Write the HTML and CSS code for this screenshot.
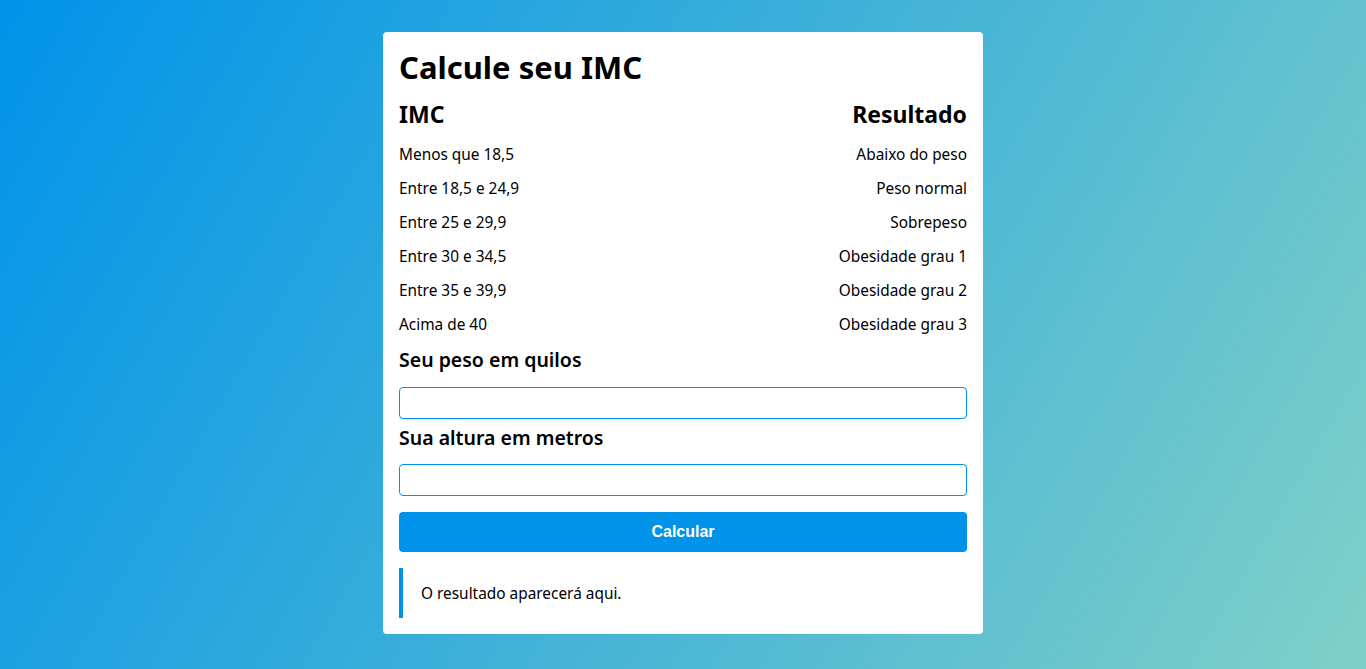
FILE: index.html
```html
<!DOCTYPE html>
<html lang="pt-BR">
<head>
<meta charset="utf-8">
<title>Calcule seu IMC</title>
<link rel="stylesheet" href="styles.css">
</head>
<body>
<main class="card">
  <h1 class="title">Calcule seu IMC</h1>
  <div class="table">
    <div class="th">IMC</div><div class="th right">Resultado</div>
    <div class="td">Menos que 18,5</div><div class="td right">Abaixo do peso</div>
    <div class="td">Entre 18,5 e 24,9</div><div class="td right">Peso normal</div>
    <div class="td">Entre 25 e 29,9</div><div class="td right">Sobrepeso</div>
    <div class="td">Entre 30 e 34,5</div><div class="td right">Obesidade grau 1</div>
    <div class="td">Entre 35 e 39,9</div><div class="td right">Obesidade grau 2</div>
    <div class="td">Acima de 40</div><div class="td right">Obesidade grau 3</div>
  </div>
  <label class="label" for="peso">Seu peso em quilos</label>
  <input class="input" id="peso" type="text">
  <label class="label" for="altura">Sua altura em metros</label>
  <input class="input" id="altura" type="text">
  <button class="button" type="button">Calcular</button>
  <div class="result">O resultado aparecerá aqui.</div>
</main>
</body>
</html>
```
FILE: styles.css
```css
* { box-sizing: border-box; }
html, body { height: 100%; }
body {
  margin: 0;
  background: linear-gradient(120deg, #0093E9 0%, #80D0C7 100%);
  font-family: "Noto Sans", "Open Sans", sans-serif;
  color: #000;
  display: flex;
  justify-content: center;
  align-items: flex-start;
}
.card {
  width: 600px;
  margin-top: 32px;
  background: #fff;
  border-radius: 4px;
  padding: 16px;
  display: flex;
  flex-direction: column;
}
.title {
  margin: 0;
  font-size: 31px;
  line-height: 38px;
  font-weight: 700;
}
.table {
  margin-top: 13px;
  display: grid;
  grid-template-columns: 1fr 1fr;
  font-size: 15.4px;
}
.th {
  font-size: 23px;
  font-weight: 700;
  line-height: 30px;
  margin-bottom: 9px;
}
.td {
  line-height: 34px;
}
.right { text-align: right; }
.label {
  font-size: 19.5px;
  font-weight: 600;
  line-height: 24px;
  margin-top: 6px;
}
.input {
  margin-top: 15px;
  height: 32px;
  border: 1px solid #0093E9;
  border-radius: 4px;
  font-size: 16px;
  padding: 0 8px;
  outline: none;
}
.input + .label { margin-top: 7px; }
.input + .label + .input { margin-top: 14px; }
.button {
  margin-top: 16px;
  height: 40px;
  background: #0093E9;
  color: #fff;
  border: none;
  border-radius: 4px;
  font-family: "Liberation Sans", Arial, sans-serif;
  font-weight: 700;
  font-size: 16px;
}
.result {
  margin-top: 16px;
  height: 50px;
  border-left: 4px solid #0093E9;
  padding-left: 18px;
  display: flex;
  align-items: center;
  font-size: 15.4px;
}
```
